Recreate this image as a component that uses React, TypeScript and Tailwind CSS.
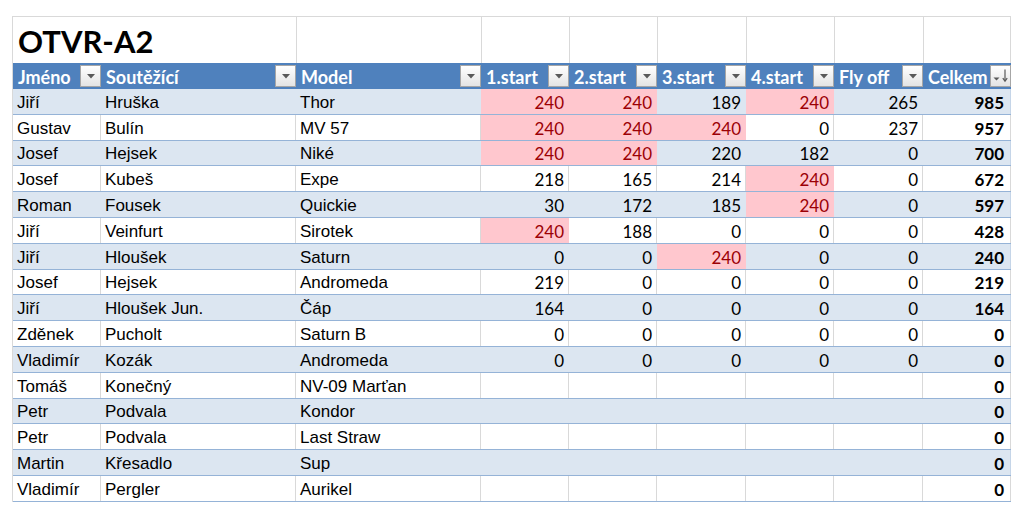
import React from "react"

type Row = {
  name: string
  surname: string
  model: string
  scores: number[] | null
  total: number
  pink?: number[]
}

const rows: Row[] = [
  { name: "Jiří", surname: "Hruška", model: "Thor", scores: [240, 240, 189, 240, 265], total: 985, pink: [0, 1, 3] },
  { name: "Gustav", surname: "Bulín", model: "MV 57", scores: [240, 240, 240, 0, 237], total: 957, pink: [0, 1, 2] },
  { name: "Josef", surname: "Hejsek", model: "Niké", scores: [240, 240, 220, 182, 0], total: 700, pink: [0, 1] },
  { name: "Josef", surname: "Kubeš", model: "Expe", scores: [218, 165, 214, 240, 0], total: 672, pink: [3] },
  { name: "Roman", surname: "Fousek", model: "Quickie", scores: [30, 172, 185, 240, 0], total: 597, pink: [3] },
  { name: "Jiří", surname: "Veinfurt", model: "Sirotek", scores: [240, 188, 0, 0, 0], total: 428, pink: [0] },
  { name: "Jiří", surname: "Hloušek", model: "Saturn", scores: [0, 0, 240, 0, 0], total: 240, pink: [2] },
  { name: "Josef", surname: "Hejsek", model: "Andromeda", scores: [219, 0, 0, 0, 0], total: 219 },
  { name: "Jiří", surname: "Hloušek Jun.", model: "Čáp", scores: [164, 0, 0, 0, 0], total: 164 },
  { name: "Zděnek", surname: "Pucholt", model: "Saturn B", scores: [0, 0, 0, 0, 0], total: 0 },
  { name: "Vladimír", surname: "Kozák", model: "Andromeda", scores: [0, 0, 0, 0, 0], total: 0 },
  { name: "Tomáš", surname: "Konečný", model: "NV-09 Marťan", scores: null, total: 0 },
  { name: "Petr", surname: "Podvala", model: "Kondor", scores: null, total: 0 },
  { name: "Petr", surname: "Podvala", model: "Last Straw", scores: null, total: 0 },
  { name: "Martin", surname: "Křesadlo", model: "Sup", scores: null, total: 0 },
  { name: "Vladimír", surname: "Pergler", model: "Aurikel", scores: null, total: 0 },
]

const headers = ["Jméno", "Soutěžící", "Model", "1.start", "2.start", "3.start", "4.start", "Fly off", "Celkem"]

const grid = "grid grid-cols-[88px_195px_185px_88px_88px_89px_88px_89px_88px]"

function FilterButton({ sort }: { sort?: boolean }) {
  return (
    <span className="ml-auto flex h-[22px] w-[21px] shrink-0 items-center justify-center border border-[#a6a6a6] bg-gradient-to-b from-white to-[#e4e4e4]">
      {sort ? (
        <svg width="19" height="20" viewBox="0 0 19 20">
          <path d="M2.5 11.5h6l-3 3z" fill="#595959" />
          <path d="M14 3.5v11" stroke="#595959" strokeWidth="1.2" />
          <path d="M11.8 12.2 14 15.2l2.2-3" stroke="#595959" strokeWidth="1.2" fill="none" />
        </svg>
      ) : (
        <svg width="8" height="5" viewBox="0 0 8 5">
          <path d="M0 0h8L4 4.5z" fill="#595959" />
        </svg>
      )}
    </span>
  )
}

export default function App() {
  return (
    <div className="h-[522px] w-[1024px] overflow-hidden bg-white pl-[12px] pt-[16px]">
      <div className="w-[999px] border-l border-[#d9d9d9]">
        {/* title row */}
        <div className={`${grid} h-[47px] border-t border-[#d9d9d9]`}>
          <div className="col-span-2 flex items-end pb-[6px] pl-[5px] font-['Lato'] text-[31px] font-bold leading-none text-black">
            OTVR-A2
          </div>
          {Array.from({ length: 7 }).map((_, i) => (
            <div key={i} className="border-l border-[#d9d9d9] last:border-r" />
          ))}
        </div>

        {/* header */}
        <div className={`${grid} h-[26px] bg-[#4f81bd]`}>
          {headers.map((h, i) => (
            <div key={h} className="flex items-center whitespace-nowrap pl-[5px] font-['Lato'] text-[18px] font-bold leading-[20px] text-white">
              <span className="pt-[2px]">{h}</span>
              <FilterButton sort={i === headers.length - 1} />
            </div>
          ))}
        </div>

        {/* data */}
        {rows.map((r, idx) => {
          const band = idx % 2 === 0
          const base = band ? "bg-[#dce6f1] border-r-transparent" : "bg-white border-r-[#d9d9d9]"
          const text = `flex items-center border-r pl-[4px] pt-[3px] whitespace-nowrap font-['Liberation_Sans'] text-[17px] leading-[20px] text-black ${base}`
          return (
            <div key={idx} className={`${grid} h-[25.8px] border-b border-[#95b3d7]`}>
              <div className={text}>{r.name}</div>
              <div className={text}>{r.surname}</div>
              <div className={text}>{r.model}</div>
              {[0, 1, 2, 3, 4].map((c) => {
                const isPink = r.pink?.includes(c)
                const v = r.scores ? r.scores[c] : null
                return (
                  <div
                    key={c}
                    className={`flex items-center justify-end border-r pr-[4px] pt-[3px] font-['Lato'] text-[17px] leading-[20px] ${
                      isPink ? "bg-[#ffc7ce] border-r-transparent text-[#9c0006]" : `${base} text-black`
                    }`}
                  >
                    {v}
                  </div>
                )
              })}
              <div className={`flex items-center justify-end border-r pr-[6px] pt-[3px] font-['Lato'] text-[17px] font-bold leading-[20px] text-black ${band ? "bg-[#dce6f1] border-r-[#c5d5e8]" : "bg-white border-r-[#d9d9d9]"}`}>
                {r.total}
              </div>
            </div>
          )
        })}
      </div>
    </div>
  )
}
